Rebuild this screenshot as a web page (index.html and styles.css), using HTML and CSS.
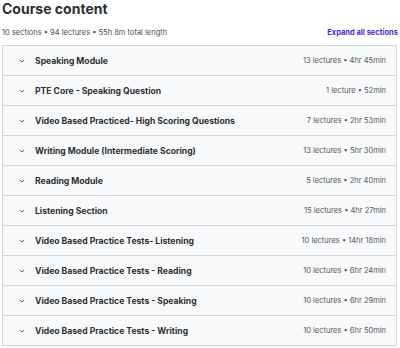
FILE: index.html
```html
<!DOCTYPE html>
<html lang="en">

<head>
    <meta charset="UTF-8" />
    <meta name="viewport" content="width=device-width, initial-scale=1.0" />
    <title>Course content</title>
    <link rel="stylesheet" href="styles.css">
</head>

<body>
    <h2 class="title">Course content</h2>
    <div class="summary">
        <span>10 sections • 94 lectures • 55h 8m total length</span>
        <button class="expand">Expand all sections</button>
    </div>

    <div class="sections">
        <div class="section">
            <span class="chevron"><svg viewBox="0 0 10 10"><path d="M2.8 4 5 6 7.2 4" /></svg></span>
            <span class="name">Speaking Module</span>
            <span class="meta">13 lectures • 4hr 45min</span>
        </div>
        <div class="section">
            <span class="chevron"><svg viewBox="0 0 10 10"><path d="M2.8 4 5 6 7.2 4" /></svg></span>
            <span class="name">PTE Core - Speaking Question</span>
            <span class="meta">1 lecture • 52min</span>
        </div>
        <div class="section">
            <span class="chevron"><svg viewBox="0 0 10 10"><path d="M2.8 4 5 6 7.2 4" /></svg></span>
            <span class="name">Video Based Practiced- High Scoring Questions</span>
            <span class="meta">7 lectures • 2hr 53min</span>
        </div>
        <div class="section">
            <span class="chevron"><svg viewBox="0 0 10 10"><path d="M2.8 4 5 6 7.2 4" /></svg></span>
            <span class="name">Writing Module (Intermediate Scoring)</span>
            <span class="meta">13 lectures • 5hr 30min</span>
        </div>
        <div class="section">
            <span class="chevron"><svg viewBox="0 0 10 10"><path d="M2.8 4 5 6 7.2 4" /></svg></span>
            <span class="name">Reading Module</span>
            <span class="meta">5 lectures • 2hr 40min</span>
        </div>
        <div class="section">
            <span class="chevron"><svg viewBox="0 0 10 10"><path d="M2.8 4 5 6 7.2 4" /></svg></span>
            <span class="name">Listening Section</span>
            <span class="meta">15 lectures • 4hr 27min</span>
        </div>
        <div class="section">
            <span class="chevron"><svg viewBox="0 0 10 10"><path d="M2.8 4 5 6 7.2 4" /></svg></span>
            <span class="name">Video Based Practice Tests- Listening</span>
            <span class="meta">10 lectures • 14hr 18min</span>
        </div>
        <div class="section">
            <span class="chevron"><svg viewBox="0 0 10 10"><path d="M2.8 4 5 6 7.2 4" /></svg></span>
            <span class="name">Video Based Practice Tests - Reading</span>
            <span class="meta">10 lectures • 6hr 24min</span>
        </div>
        <div class="section">
            <span class="chevron"><svg viewBox="0 0 10 10"><path d="M2.8 4 5 6 7.2 4" /></svg></span>
            <span class="name">Video Based Practice Tests - Speaking</span>
            <span class="meta">10 lectures • 6hr 29min</span>
        </div>
        <div class="section">
            <span class="chevron"><svg viewBox="0 0 10 10"><path d="M2.8 4 5 6 7.2 4" /></svg></span>
            <span class="name">Video Based Practice Tests - Writing</span>
            <span class="meta">10 lectures • 6hr 50min</span>
        </div>
    </div>
</body>

</html>
```

FILE: styles.css
```css
body {
    font-family: 'Inter', 'Liberation Sans', sans-serif;
    color: #2d2f31;
    background: #fff;
    margin: 0;
    padding: 0 2px;
}

.title {
    font-size: 14px;
    font-weight: 700;
    line-height: 17px;
    margin: 0;
}

.summary {
    display: flex;
    justify-content: space-between;
    align-items: center;
    margin-top: 8px;
    height: 14px;
    font-size: 7.5px;
    color: #4a4d50;
}

.expand {
    background: none;
    border: none;
    padding: 0;
    font-family: inherit;
    font-size: 7.5px;
    font-weight: 700;
    color: #5624d0;
    cursor: pointer;
}

.sections {
    margin-top: 6px;
    width: 393px;
    border: 1px solid #d1d7dc;
}

.section {
    display: flex;
    align-items: center;
    height: 29px;
    background: #f7f9fa;
    border-bottom: 1px solid #d1d7dc;
    padding: 0 10px 0 14px;
}

.section:last-child {
    border-bottom: none;
}

.chevron {
    width: 10px;
    height: 10px;
    margin-right: 8px;
    display: flex;
}

.chevron svg {
    width: 10px;
    height: 10px;
    fill: none;
    stroke: #4a4d50;
    stroke-width: 0.9;
}

.name {
    flex: 1;
    font-size: 8.6px;
    font-weight: 700;
}

.meta {
    font-size: 7.5px;
    color: #55585b;
}
```
